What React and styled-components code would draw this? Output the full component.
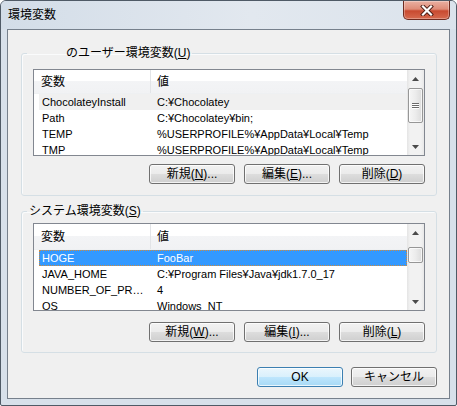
import React from "react";
import styled, { createGlobalStyle } from "styled-components";

const Global = createGlobalStyle`
  html, body { margin:0; padding:0; background:#fff; }
  body {
    font-family:"Liberation Sans","Noto Sans CJK JP",sans-serif;
    font-size:12px;
    color:#000;
  }
`;

const ui = `"Liberation Sans","Noto Sans CJK JP",sans-serif`;

const Window = styled.div`
  box-sizing:border-box;
  width:457px;
  height:406px;
  border:1px solid #4f5a66;
  border-radius:6px 6px 2px 2px;
  background:#d7e0ea;
  display:flex;
  flex-direction:column;
  overflow:hidden;
`;

const TitleBar = styled.div`
  flex:none;
  height:28px;
  display:flex;
  align-items:center;
  padding:0 6px 0 7px;
  background:linear-gradient(90deg,#d3dde8 0%,#e2e8ef 55%,#dbe3ec 100%);
`;

const Title = styled.span`
  font:12px/14px ${ui};
  color:#000;
`;

const CloseButton = styled.button`
  align-self:flex-start;
  margin-left:auto;
  width:47px;
  height:19px;
  box-sizing:border-box;
  padding:0;
  display:flex;
  align-items:center;
  justify-content:center;
  border:1px solid #6e2b20;
  border-top:none;
  border-radius:0 0 5px 5px;
  background:linear-gradient(180deg,#eab0a2 0%,#df8c78 45%,#c84a30 55%,#d66a4f 100%);
  box-shadow:inset 0 0 0 1px rgba(255,255,255,.3);
`;

const Client = styled.div`
  flex:1;
  margin:0 6px 6px;
  border:1px solid #76808c;
  background:#f0f0f0;
  padding:16px 12px 11px 13px;
  display:flex;
  flex-direction:column;
`;

const Group = styled.fieldset`
  margin:${p => p.$top}px 0 0;
  padding:${p => p.$pt}px 11px ${p => p.$pb}px;
  border:1px solid #d5dfe5;
  border-radius:3px;
  box-shadow:inset 1px 1px 0 #fafbfc;
  min-width:0;
`;

const Legend = styled.legend`
  margin-left:-6px;
  padding:0 2px 0 ${p => p.$lead}px;
  font:12px/14px ${ui};
`;

const List = styled.div`
  height:${p => p.$h}px;
  box-sizing:border-box;
  border:1px solid #828790;
  background:#fff;
  display:flex;
  overflow:hidden;
`;

const Table = styled.div`
  flex:1;
  min-width:0;
  overflow:hidden;
`;

const Header = styled.div`
  height:${p => p.$h}px;
  display:grid;
  grid-template-columns:117px 1fr;
  background:linear-gradient(#fff 0%,#fff 46%,#f3f4f6 46%,#f1f2f4 100%);
  border-bottom:1px solid #eef0f2;
  box-sizing:border-box;
`;

const HeadCell = styled.div`
  display:flex;
  align-items:center;
  padding-left:${p => p.$pad}px;
  font:12px/14px ${ui};
  border-right:${p => (p.$divider ? "1px solid #e2e4e7" : "none")};
`;

const Row = styled.div`
  height:16px;
  margin-left:5px;
  box-sizing:border-box;
  display:grid;
  grid-template-columns:112px 1fr;
  align-items:center;
  font:11px/16px "Liberation Sans",sans-serif;
  background:${p => (p.$selected ? "#3399ff" : p.$muted ? "#f0f0f0" : "transparent")};
  color:${p => (p.$selected ? "#fff" : "#000")};
  outline:${p => (p.$selected ? "1px dotted #d08a3c" : "none")};
  outline-offset:-1px;
`;

const Cell = styled.div`
  padding-left:${p => p.$pad}px;
  white-space:nowrap;
  overflow:hidden;
  text-overflow:ellipsis;
`;

const ScrollBar = styled.div`
  width:17px;
  flex:none;
  display:flex;
  flex-direction:column;
  background:linear-gradient(90deg,#e4e4e4 0%,#f2f2f2 18%,#f2f2f2 82%,#e8e8e8 100%);
`;

const ArrowBox = styled.div`
  flex:none;
  height:17px;
  display:flex;
  align-items:center;
  justify-content:center;
`;

const Thumb = styled.div`
  flex:none;
  margin:${p => p.$offset}px 1px 0;
  height:${p => p.$size}px;
  box-sizing:border-box;
  border:1px solid #979797;
  border-radius:2px;
  background:linear-gradient(90deg,#f6f6f6 0%,#ececec 50%,#dcdcdc 100%);
  box-shadow:inset 0 0 0 1px rgba(255,255,255,.7);
  display:flex;
  flex-direction:column;
  align-items:center;
  justify-content:center;
  gap:1px;
`;

const Grip = styled.span`
  width:7px;
  height:1px;
  background:#6b6b6b;
  box-shadow:0 1px 0 #fff;
`;

const Track = styled.div`
  flex:1;
`;

const ButtonRow = styled.div`
  margin-top:${p => p.$top}px;
  display:flex;
  justify-content:flex-end;
  gap:${p => p.$gap}px;
`;

const Button = styled.button`
  width:86px;
  height:20px;
  box-sizing:border-box;
  padding:0;
  font:12px/14px ${ui};
  color:#000;
  border:1px solid #707070;
  border-radius:3px;
  background:linear-gradient(#f2f2f2 0%,#ebebeb 49%,#dddddd 50%,#cfcfcf 100%);
  box-shadow:inset 0 0 0 1px rgba(255,255,255,.75);
`;

const DefaultButton = styled(Button)`
  border-color:#3c7fb1;
  background:linear-gradient(#eaf6fd 0%,#d9f0fc 49%,#bee6fd 50%,#a7d9f5 100%);
`;

const Arrow = ({ down }) => (
  <svg width="7" height="4" viewBox="0 0 7 4">
    <polygon points={down ? "0,0 7,0 3.5,4" : "0,4 7,4 3.5,0"} fill="#4a4a4a" />
  </svg>
);

const CloseIcon = () => (
  <svg width="14" height="11" viewBox="0 0 14 11">
    <path d="M3 1.5 L11 9.5 M11 1.5 L3 9.5" stroke="#4a1c14" strokeWidth="4" strokeLinecap="square" />
    <path d="M3 1.5 L11 9.5 M11 1.5 L3 9.5" stroke="#fff" strokeWidth="2.2" strokeLinecap="square" />
  </svg>
);

const VarList = ({ rows, height, head, thumbOffset, thumbSize, grip }) => (
  <List $h={height}>
    <Table>
      <Header $h={head}>
        <HeadCell $pad={7} $divider>変数</HeadCell>
        <HeadCell $pad={6}>値</HeadCell>
      </Header>
      {rows.map(r => (
        <Row key={r.name} $selected={r.selected} $muted={r.muted}>
          <Cell $pad={3}>{r.name}</Cell>
          <Cell $pad={6}>{r.value}</Cell>
        </Row>
      ))}
    </Table>
    <ScrollBar>
      <ArrowBox><Arrow /></ArrowBox>
      <Thumb $offset={thumbOffset} $size={thumbSize}>
        {grip && (
          <>
            <Grip />
            <Grip />
            <Grip />
          </>
        )}
      </Thumb>
      <Track />
      <ArrowBox><Arrow down /></ArrowBox>
    </ScrollBar>
  </List>
);

const userVars = [
  { name: "ChocolateyInstall", value: "C:¥Chocolatey", muted: true },
  { name: "Path", value: "C:¥Chocolatey¥bin;" },
  { name: "TEMP", value: "%USERPROFILE%¥AppData¥Local¥Temp" },
  { name: "TMP", value: "%USERPROFILE%¥AppData¥Local¥Temp" },
];

const systemVars = [
  { name: "HOGE", value: "FooBar", selected: true },
  { name: "JAVA_HOME", value: "C:¥Program Files¥Java¥jdk1.7.0_17" },
  { name: "NUMBER_OF_PROCESSORS", value: "4" },
  { name: "OS", value: "Windows_NT" },
];

export default function App() {
  return (
    <>
      <Global />
      <Window>
        <TitleBar>
          <Title>環境変数</Title>
          <CloseButton aria-label="閉じる"><CloseIcon /></CloseButton>
        </TitleBar>
        <Client>
          <Group $top={0} $pt={9} $pb={11}>
            <Legend $lead={39}>のユーザー環境変数(<u>U</u>)</Legend>
            <VarList rows={userVars} height={87} head={24} thumbOffset={1} thumbSize={35} grip />
            <ButtonRow $top={8} $gap={9}>
              <Button>新規(<u>N</u>)...</Button>
              <Button>編集(<u>E</u>)...</Button>
              <Button>削除(<u>D</u>)</Button>
            </ButtonRow>
          </Group>
          <Group $top={8} $pt={5} $pb={10}>
            <Legend $lead={2}>システム環境変数(<u>S</u>)</Legend>
            <VarList rows={systemVars} height={88} head={26} thumbOffset={6} thumbSize={16} />
            <ButtonRow $top={11} $gap={9}>
              <Button>新規(<u>W</u>)...</Button>
              <Button>編集(<u>I</u>)...</Button>
              <Button>削除(<u>L</u>)</Button>
            </ButtonRow>
          </Group>
          <ButtonRow $top={14} $gap={8}>
            <DefaultButton>OK</DefaultButton>
            <Button>キャンセル</Button>
          </ButtonRow>
        </Client>
      </Window>
    </>
  );
}
